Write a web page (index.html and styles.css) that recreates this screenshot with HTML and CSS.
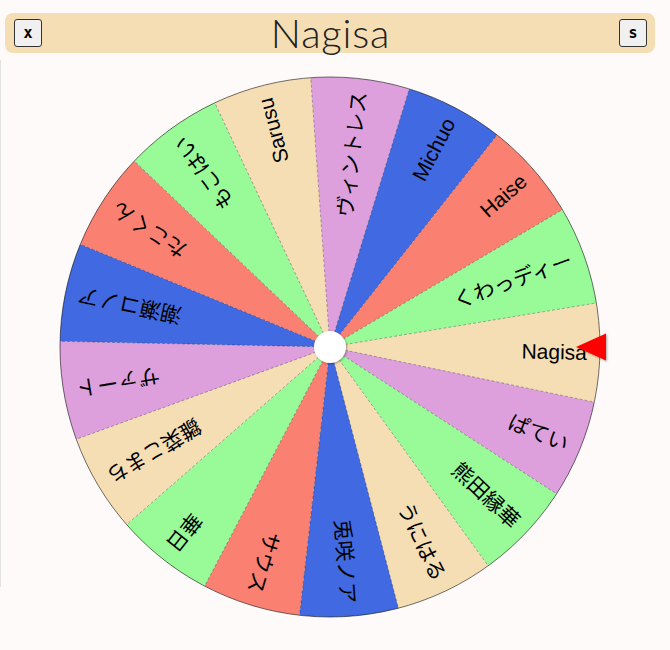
FILE: index.html
```html
<!DOCTYPE html>
<html>
<head>
    <title>Wheel</title>
    <link rel="stylesheet" href="styles.css">
</head>
<body>
<div class="edge"></div>
<div class="app">
    <div class="topbar">
        <button class="btn">x</button>
        <h1 class="title">Nagisa</h1>
        <button class="btn">s</button>
    </div>
    <div class="wheel-box">
        <svg class="wheel" width="650" height="560" viewBox="-325 -280 650 560">
            <defs>
                <path id="seg" d="M0 0 L265.40 -49.61 A270 270 0 0 1 265.40 49.61 Z"/>
                <filter id="shadow" x="-50%" y="-50%" width="200%" height="200%">
                    <feDropShadow dx="1" dy="1" stdDeviation="1.2" flood-color="#000" flood-opacity="0.35"/>
                </filter>
            </defs>
            <!-- segments, clockwise from the pointer -->
            <g>
                <use href="#seg" fill="#f5deb3" transform="rotate(1.2)"/>
                <use href="#seg" fill="#dda0dd" transform="rotate(22.38)"/>
                <use href="#seg" fill="#98fb98" transform="rotate(43.55)"/>
                <use href="#seg" fill="#f5deb3" transform="rotate(64.73)"/>
                <use href="#seg" fill="#4169e1" transform="rotate(85.91)"/>
                <use href="#seg" fill="#fa8072" transform="rotate(107.08)"/>
                <use href="#seg" fill="#98fb98" transform="rotate(128.26)"/>
                <use href="#seg" fill="#f5deb3" transform="rotate(149.44)"/>
                <use href="#seg" fill="#dda0dd" transform="rotate(170.61)"/>
                <use href="#seg" fill="#4169e1" transform="rotate(191.79)"/>
                <use href="#seg" fill="#fa8072" transform="rotate(212.96)"/>
                <use href="#seg" fill="#98fb98" transform="rotate(234.14)"/>
                <use href="#seg" fill="#f5deb3" transform="rotate(255.32)"/>
                <use href="#seg" fill="#dda0dd" transform="rotate(276.49)"/>
                <use href="#seg" fill="#4169e1" transform="rotate(297.67)"/>
                <use href="#seg" fill="#fa8072" transform="rotate(318.85)"/>
                <use href="#seg" fill="#98fb98" transform="rotate(340.02)"/>
            </g>
            <g class="divider">
                <line x2="270" transform="rotate(-9.39)"/>
                <line x2="270" transform="rotate(11.79)"/>
                <line x2="270" transform="rotate(32.96)"/>
                <line x2="270" transform="rotate(54.14)"/>
                <line x2="270" transform="rotate(75.32)"/>
                <line x2="270" transform="rotate(96.49)"/>
                <line x2="270" transform="rotate(117.67)"/>
                <line x2="270" transform="rotate(138.85)"/>
                <line x2="270" transform="rotate(160.02)"/>
                <line x2="270" transform="rotate(181.2)"/>
                <line x2="270" transform="rotate(202.37)"/>
                <line x2="270" transform="rotate(223.55)"/>
                <line x2="270" transform="rotate(244.73)"/>
                <line x2="270" transform="rotate(265.9)"/>
                <line x2="270" transform="rotate(287.08)"/>
                <line x2="270" transform="rotate(308.26)"/>
                <line x2="270" transform="rotate(329.43)"/>
            </g>
            <circle class="rim" r="270"/>
            <g class="labels">
                <text x="257" transform="rotate(1.2)">Nagisa</text>
                <text x="257" transform="rotate(22.38)">ぱてい</text>
                <text x="257" transform="rotate(43.55)">熊田縁華</text>
                <text x="257" transform="rotate(64.73)">うにはる</text>
                <text x="257" transform="rotate(85.91)">兎咲ノア</text>
                <text x="257" transform="rotate(107.08)">サウス</text>
                <text x="257" transform="rotate(128.26)">華日</text>
                <text x="257" transform="rotate(149.44)">雛菜こまち</text>
                <text x="257" transform="rotate(170.61)">ザァート</text>
                <text x="257" transform="rotate(191.79)">潮瀬コノア</text>
                <text x="257" transform="rotate(212.96)">たこくん</text>
                <text x="257" transform="rotate(234.14)">もこはい</text>
                <text x="257" transform="rotate(255.32)">Sarusu</text>
                <text x="257" transform="rotate(276.49)">ヴィントレス</text>
                <text x="257" transform="rotate(297.67)">Michuo</text>
                <text x="257" transform="rotate(318.85)">Haise</text>
                <text x="257" transform="rotate(340.02)">くわっディー</text>
            </g>
            <circle class="hub" r="16" filter="url(#shadow)"/>
            <polygon class="pointer" points="246,0 276,-13.5 276,13.5" filter="url(#shadow)"/>
        </svg>
    </div>
</div>
</body>
</html>
```

FILE: styles.css
```css
body {
    margin: 0;
    background: #fffafa;
    font-family: "Liberation Sans", Arial, sans-serif;
}
.edge {
    position: absolute;
    left: 0;
    top: 60px;
    width: 1px;
    height: 527px;
    background: #e2e2e2;
}
.app {
    width: 650px;
    margin-left: 5px;
    padding-top: 13px;
}
.topbar {
    display: flex;
    align-items: center;
    justify-content: space-between;
    height: 40px;
    padding: 0 8px 0 9px;
    background: #f5deb3;
    border-radius: 8px;
}
.title {
    margin: 0;
    font-family: Lato, "Liberation Sans", sans-serif;
    font-size: 40px;
    font-weight: 300;
    letter-spacing: 0.8px;
    color: #222;
    line-height: 40px;
}
.btn {
    width: 28px;
    height: 28px;
    padding: 0;
    background: #f0f0f0;
    border: 1.5px solid #333;
    border-radius: 3px;
    font-family: "DejaVu Sans Mono", monospace;
    font-weight: bold;
    font-size: 15px;
    color: #000;
}
.wheel-box {
    display: flex;
    justify-content: center;
    margin-top: 14px;
}
.wheel {
    display: block;
}
.divider line {
    stroke: rgba(0, 0, 0, 0.35);
    stroke-width: 0.8;
    stroke-dasharray: 3 2;
}
.rim {
    fill: none;
    stroke: rgba(0, 0, 0, 0.55);
    stroke-width: 1;
}
.labels text {
    font-family: "Liberation Sans", "Noto Sans CJK JP", sans-serif;
    font-size: 21px;
    fill: #000;
    text-anchor: end;
    dominant-baseline: central;
}
.hub {
    fill: #fff;
}
.pointer {
    fill: #ff0000;
}
```
